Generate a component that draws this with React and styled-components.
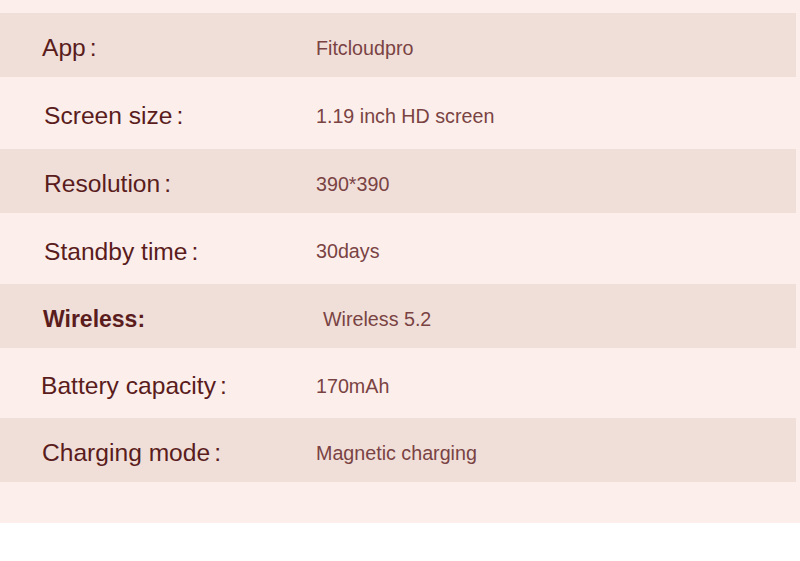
import React from "react";
import styled, { createGlobalStyle } from "styled-components";

const GlobalStyle = createGlobalStyle`
  body {
    margin: 0;
    background: #ffffff;
    font-family: "Liberation Sans", Arial, sans-serif;
  }
`;

const Sheet = styled.div`
  width: 800px;
  height: 523px;
  padding-top: 13px;
  box-sizing: border-box;
  background: #fcefeb;
  display: flex;
  flex-direction: column;
`;

const Row = styled.div`
  display: grid;
  grid-template-columns: 316px 1fr;
  align-items: center;
  height: ${(p) => p.$h}px;
  width: 796px;
  box-sizing: border-box;
  padding-top: 6px;
  background: ${(p) => (p.$shaded ? "#f0dfd9" : "transparent")};
`;

const Label = styled.div`
  padding-left: ${(p) => p.$indent}px;
  font-size: ${(p) => (p.$bold ? 23 : 24.6)}px;
  font-weight: ${(p) => (p.$bold ? 700 : 400)};
  color: #5a1c1c;
  white-space: nowrap;
`;

const Colon = styled.span`
  margin-left: ${(p) => (p.$tight ? 0 : 4)}px;
`;

const Value = styled.div`
  padding-left: ${(p) => p.$indent || 0}px;
  font-size: 19.7px;
  color: #7a4343;
  white-space: nowrap;
`;

const specs = [
  { label: "App", value: "Fitcloudpro", h: 64, shaded: true, indent: 42 },
  { label: "Screen size", value: "1.19 inch HD screen", h: 72, indent: 44 },
  { label: "Resolution", value: "390*390", h: 64, shaded: true, indent: 44 },
  { label: "Standby time", value: "30days", h: 71, indent: 44 },
  { label: "Wireless", value: "Wireless 5.2", h: 64, shaded: true, indent: 43, bold: true, valueIndent: 7 },
  { label: "Battery capacity", value: "170mAh", h: 70, indent: 41 },
  { label: "Charging mode", value: "Magnetic charging", h: 64, shaded: true, indent: 42 },
];

export default function App() {
  return (
    <>
      <GlobalStyle />
      <Sheet>
        {specs.map((s) => (
          <Row key={s.label} $h={s.h} $shaded={s.shaded}>
            <Label $indent={s.indent} $bold={s.bold}>
              {s.label}
              <Colon $tight={s.bold}>:</Colon>
            </Label>
            <Value $indent={s.valueIndent}>{s.value}</Value>
          </Row>
        ))}
      </Sheet>
    </>
  );
}
